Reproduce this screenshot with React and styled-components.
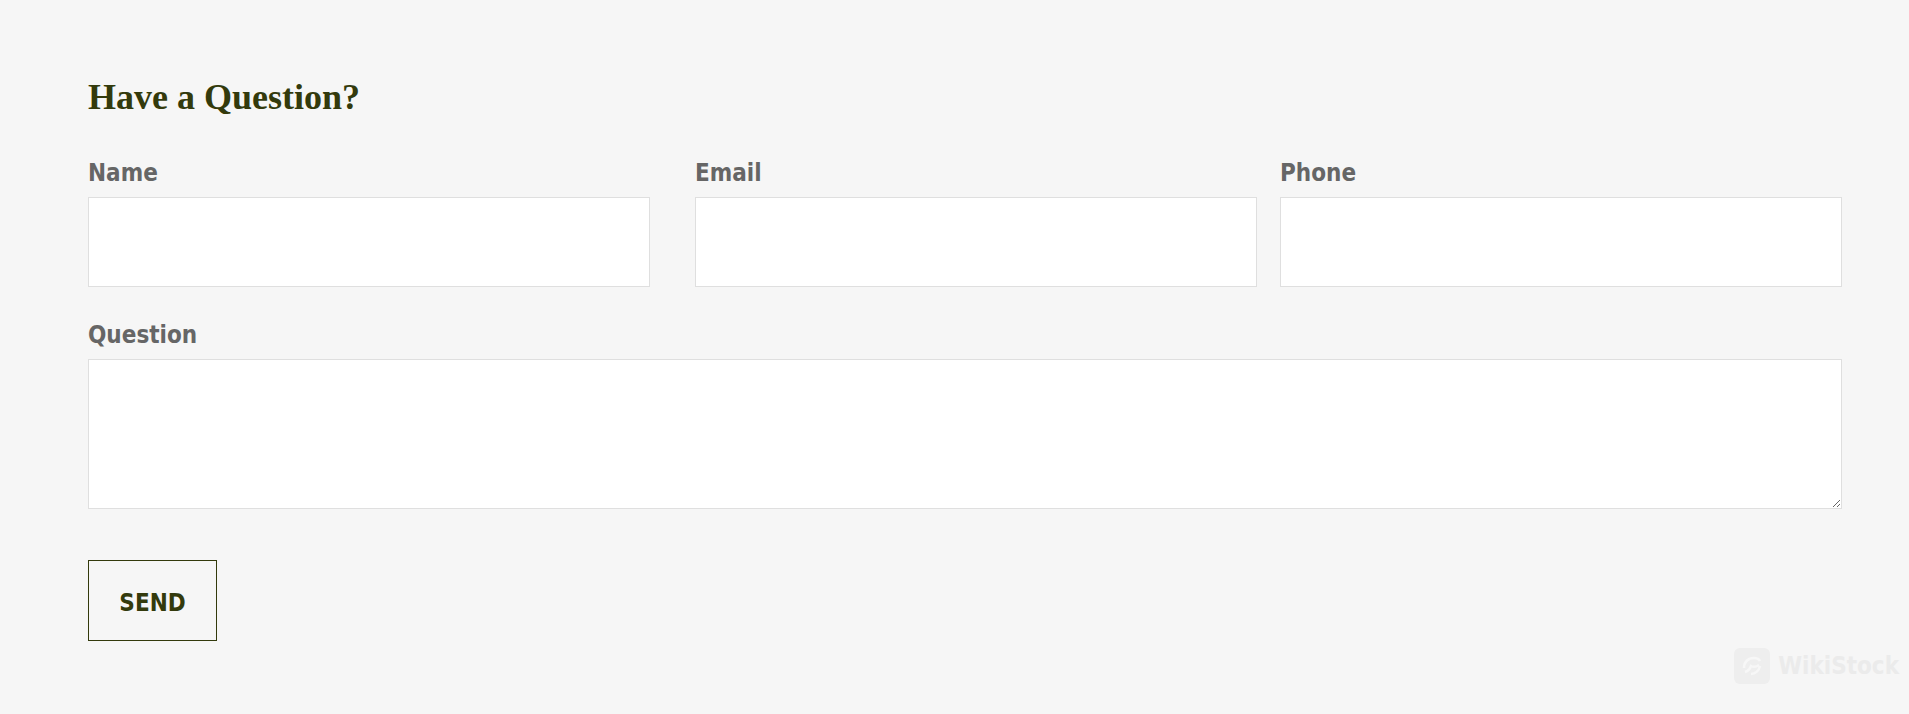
import React from 'react';
import styled, { createGlobalStyle } from 'styled-components';

const GlobalStyle = createGlobalStyle`
  html, body {
    margin: 0;
    padding: 0;
    background: #f6f6f6;
  }
  body {
    min-height: 714px;
  }
`;

const Page = styled.div`
  position: relative;
  min-height: 714px;
  box-sizing: border-box;
  padding: 79px 67px 0 88px;
  background: #f6f6f6;
`;

const Title = styled.h2`
  margin: 0 0 44px;
  font-family: 'Liberation Serif', 'Times New Roman', serif;
  font-size: 36px;
  line-height: 36px;
  font-weight: 700;
  color: #333a0c;
`;

const Row = styled.div`
  display: grid;
  grid-template-columns: 584px 562px 562px;
  column-gap: 23px;
  margin-bottom: 34px;
`;

const Field = styled.div`
  display: flex;
  flex-direction: column;
  padding-right: ${(p) => (p.$inset ? '22px' : '0')};
`;

const Label = styled.label`
  display: block;
  margin-bottom: ${(p) => p.$gap || 10}px;
  font-family: 'DejaVu Sans Condensed', 'DejaVu Sans', sans-serif;
  font-stretch: condensed;
  font-weight: 700;
  font-size: 24px;
  line-height: 28px;
  color: #666666;
`;

const Input = styled.input`
  display: block;
  box-sizing: border-box;
  width: 100%;
  height: 90px;
  margin: 0;
  padding: 0 12px;
  border: 1px solid #dfdfdf;
  border-radius: 0;
  background: #ffffff;
  font-family: 'DejaVu Sans', sans-serif;
  font-size: 18px;
  outline: none;
`;

const TextArea = styled.textarea`
  display: block;
  box-sizing: border-box;
  width: 100%;
  height: 150px;
  margin: 0;
  padding: 12px;
  border: 1px solid #dfdfdf;
  border-radius: 0;
  background: #ffffff;
  font-family: 'DejaVu Sans', sans-serif;
  font-size: 18px;
  outline: none;
`;

const SendButton = styled.button`
  display: block;
  box-sizing: border-box;
  width: 129px;
  height: 81px;
  margin-top: 51px;
  padding: 4px 0 0;
  border: 1px solid #333a0c;
  border-radius: 0;
  background: transparent;
  font-family: 'DejaVu Sans Condensed', 'DejaVu Sans', sans-serif;
  font-stretch: condensed;
  font-weight: 700;
  font-size: 24px;
  color: #333a0c;
  cursor: pointer;
`;

const Watermark = styled.div`
  position: absolute;
  right: 10px;
  bottom: 30px;
  display: flex;
  align-items: center;
  gap: 8px;
  color: #ebebeb;
  font-family: 'DejaVu Sans Condensed', 'DejaVu Sans', sans-serif;
  font-weight: 700;
  font-size: 24px;
  pointer-events: none;
`;

const LogoBox = styled.div`
  width: 36px;
  height: 36px;
  border-radius: 6px;
  background: #eeeeee;
  display: flex;
  align-items: center;
  justify-content: center;
`;

const App = () => {
  return (
    <>
      <GlobalStyle />
      <Page>
        <Title>Have a Question?</Title>
        <Row>
          <Field $inset>
            <Label htmlFor='name'>Name</Label>
            <Input id='name' type='text' />
          </Field>
          <Field>
            <Label htmlFor='email'>Email</Label>
            <Input id='email' type='email' />
          </Field>
          <Field>
            <Label htmlFor='phone'>Phone</Label>
            <Input id='phone' type='tel' />
          </Field>
        </Row>
        <Label htmlFor='question' $gap={10}>Question</Label>
        <TextArea id='question' />
        <SendButton type='button'>SEND</SendButton>
        <Watermark>
          <LogoBox>
            <svg width='26' height='26' viewBox='0 0 26 26' fill='none' stroke='#f7f7f7' strokeWidth='2.5'>
              <path d='M5 15c0-6 4-10 10-10 3 0 5 1 6 3' />
              <path d='M6 19c3-1 5-3 6-6 2 1 5 1 8-1' />
              <path d='M12 21c4 0 8-3 9-8' />
            </svg>
          </LogoBox>
          WikiStock
        </Watermark>
      </Page>
    </>
  );
};

export default App;
